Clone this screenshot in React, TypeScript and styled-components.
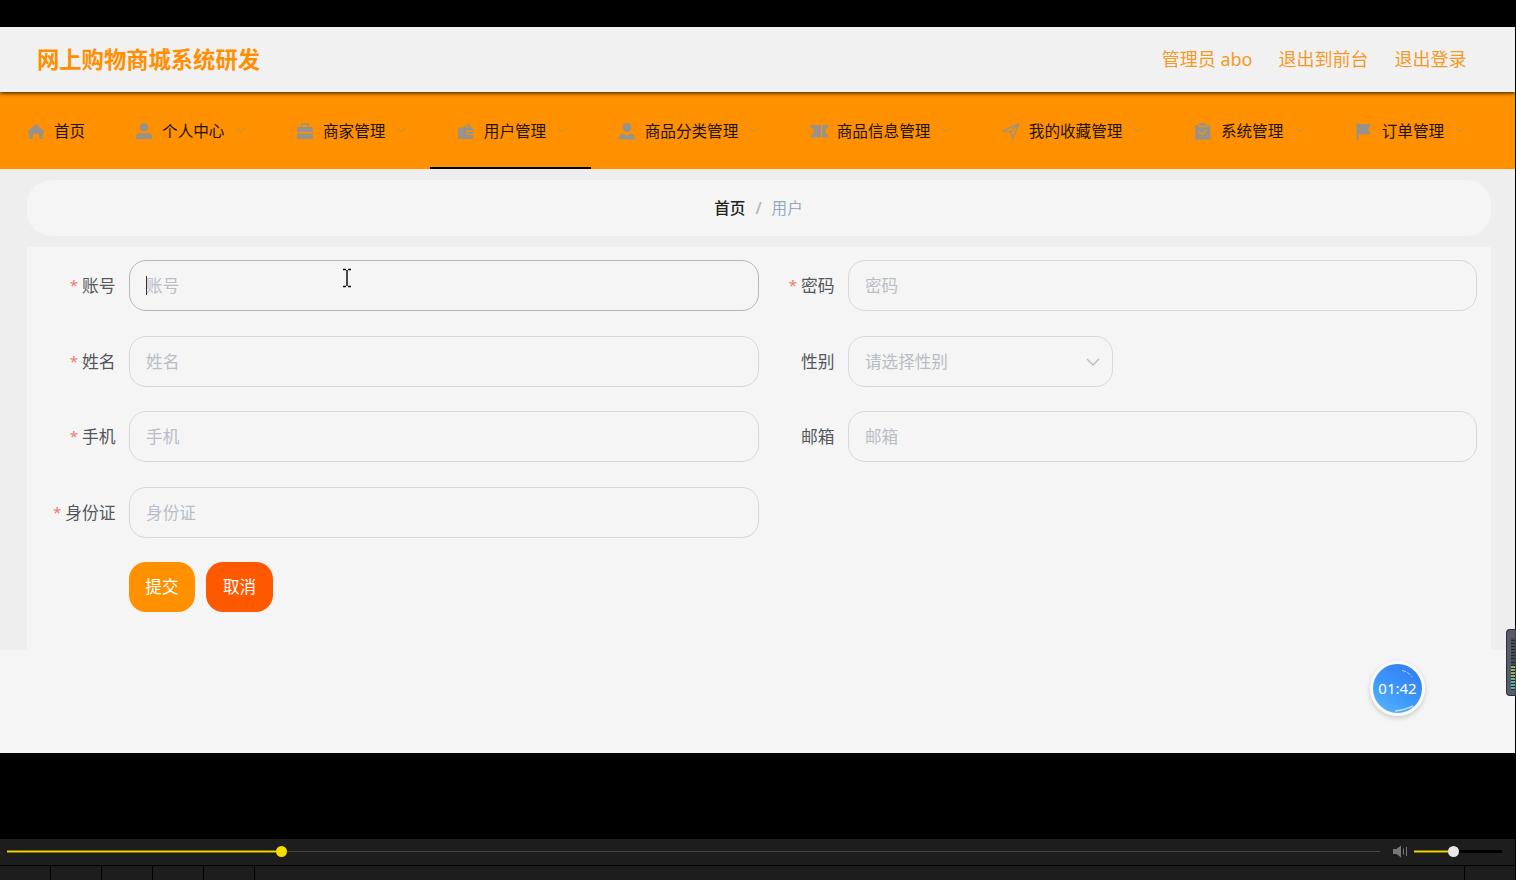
import React from 'react';
import styled, { createGlobalStyle } from 'styled-components';

const Global = createGlobalStyle`
  * { box-sizing: border-box; }
  body { margin: 0; background: #000; overflow: hidden; }
`;

const Screen = styled.div`
  width: 1516px;
  height: 880px;
  padding: 27px 1px 0 0;
  display: flex;
  flex-direction: column;
  background: #000;
  position: relative;
  font-family: 'Noto Sans', 'Noto Sans CJK SC', sans-serif;
`;
const Page = styled.div`
  height: 726px;
  flex: none;
  background: #f5f5f5;
`;
const Header = styled.header`
  height: 65px;
  display: flex;
  align-items: center;
  padding: 0 48.5px 0 37px;
  background: #f1f1f1;
  border-bottom: 1px solid #fbfbf6;
  box-shadow: 0 1px 4px rgba(0, 0, 0, 0.85);
  position: relative;
  color: #ff8f00;
`;
const Title = styled.h1`
  margin: 2px auto 0 0;
  font-size: 22.3px;
  line-height: 30px;
  font-weight: 700;
`;
const HeaderLink = styled.a`
  font-size: 18px;
  line-height: 28px;
  margin: -1px 0 0 26px;
  color: #f39a26;
  white-space: nowrap;
`;
const Nav = styled.nav`
  height: 77px;
  display: flex;
  background: #ff9000;
`;
const NavItem = styled.div<{ $active?: boolean }>`
  flex: none;
  display: flex;
  align-items: center;
  padding: 0 23.1px 0 26.9px;
  border-bottom: 2px solid ${(p) => (p.$active ? '#000' : 'transparent')};
  color: #1c1208;
  font-size: 15.6px;
  line-height: 22px;
  white-space: nowrap;
  svg { flex: none; display: block; }
`;
const NavIcon = styled.svg`
  color: #97938c;
  position: relative;
  top: 1px;
`;
const NavText = styled.span`
  margin: 2px 0 0 9px;
`;
const Arrow = styled.svg`
  margin-left: 10.5px;
`;
const Content = styled.main`
  height: 481px;
  padding: 11px 24px 0 27px;
  background: #eee;
`;
const Crumbs = styled.div`
  height: 56px;
  display: flex;
  align-items: center;
  justify-content: center;
  gap: 10px;
  padding: 0 1px 1px 0;
  border-radius: 24px;
  background: #f5f5f5;
  font-size: 15.6px;
  line-height: 22px;
  color: #97a8be;
`;
const CrumbHome = styled.span`
  color: #222;
  font-weight: 500;
`;
const Slash = styled.span`
  color: #b4b8c0;
  font-weight: 600;
`;
const Form = styled.form`
  margin-top: 11px;
  height: 403px;
  padding: 13px 13.6px 0 12.6px;
  background: #f5f5f5;
`;
const Grid = styled.div`
  display: grid;
  grid-template-columns: 1fr 1fr;
  grid-auto-rows: 51px;
  row-gap: 24.5px;
`;
const Field = styled.div`
  display: flex;
  align-items: center;
`;
const Label = styled.label`
  width: 89px;
  padding: 1px 13px 0 0;
  text-align: right;
  color: #54575c;
  font-size: 16.8px;
  line-height: 24px;
  white-space: nowrap;
`;
const Star = styled.span`
  color: #ee7c6c;
  font-size: 15px;
  margin-right: 4px;
  position: relative;
  top: -1px;
`;
const Box = styled.div<{ $focus?: boolean; $select?: boolean }>`
  ${(p) => (p.$select ? 'width: 265px;' : 'flex: 1;')}
  height: 51px;
  display: flex;
  align-items: center;
  justify-content: space-between;
  padding: 1px 12px 0 16.5px;
  border: 1px solid ${(p) => (p.$focus ? '#b9b7b9' : '#d9d7dc')};
  border-radius: 17px;
  color: #b9bdc5;
  font-size: 16.6px;
  line-height: 24px;
`;
const Value = styled.span<{ $focus?: boolean }>`
  position: relative;
  &::before {
    content: '';
    display: ${(p) => (p.$focus ? 'block' : 'none')};
    position: absolute;
    left: 0;
    top: 2px;
    width: 1px;
    height: 19px;
    background: #333;
  }
`;
const Actions = styled.div`
  display: flex;
  gap: 11px;
  margin: 24.5px 0 0 89px;
`;
const Button = styled.button<{ $color: string }>`
  width: 66.6px;
  height: 50px;
  padding: 0;
  border: 0;
  border-radius: 17px;
  background: ${(p) => p.$color};
  color: #fff;
  font: 16.6px/24px 'Noto Sans', 'Noto Sans CJK SC', sans-serif;
`;
const Pointer = styled.svg`
  position: absolute;
  left: 342px;
  top: 268px;
`;
const Timer = styled.div`
  position: absolute;
  left: 1370px;
  top: 661px;
  width: 55px;
  height: 55px;
  border: 3px solid #fafafa;
  border-radius: 50%;
  box-shadow: 0 2px 5px rgba(0, 0, 0, 0.18);
  background: linear-gradient(35deg, #55b3fb 8%, #3a96fa 48%, #347ef2 90%);
  color: #fff;
  font: 15px/48px 'Noto Sans', sans-serif;
  text-align: center;
  svg { position: absolute; left: 0; top: 0; }
`;
const Meter = styled.div`
  position: absolute;
  left: 1506px;
  top: 629px;
  width: 9px;
  height: 67px;
  padding: 8px 0 6px 4px;
  border: 1px solid #2c2f38;
  border-right: 0;
  border-radius: 4px 0 0 4px;
  background: #565c69;
  box-shadow: 0 0 2px #fff;
  display: flex;
  flex-direction: column;
  gap: 1px;
`;
const Tick = styled.i<{ $color: string }>`
  flex: 1;
  background: ${(p) => p.$color};
  box-shadow: 0 1px 0 #24272e;
`;
const Player = styled.footer`
  margin: auto 0 0;
  height: 41px;
  flex: none;
  background: #1d1d1d;
`;
const Controls = styled.div`
  height: 27px;
  padding: 0 13px 2px 7px;
  display: flex;
  align-items: center;
  border-bottom: 1px solid #000;
`;
const Track = styled.div<{ $w: number; $rest: string; $thick: number }>`
  width: ${(p) => p.$w}px;
  display: flex;
  align-items: center;
  &::after {
    content: '';
    flex: 1;
    height: ${(p) => p.$thick}px;
    background: ${(p) => p.$rest};
  }
`;
const Played = styled.div<{ $w: number }>`
  width: ${(p) => p.$w}px;
  height: 3px;
  background: linear-gradient(#7e7107 0 1px, #f6dd00 1px 2px, #7e7107 2px);
`;
const Knob = styled.div<{ $color: string }>`
  width: 11px;
  height: 11px;
  border-radius: 50%;
  background: ${(p) => p.$color};
`;
const Speaker = styled.svg`
  margin: 0 6px 0 13px;
`;
const Cells = styled.div`
  display: flex;
  height: 14px;
`;
const Cell = styled.div<{ $w: number }>`
  width: ${(p) => p.$w}px;
  border-right: 1px solid #000;
`;

const icons: Record<string, React.ReactNode> = {
  home: <path d="M1 9 9 2l8 7v1.700h-1V17h-3.700v-5.300H6V17H2v-6.300H1z" />,
  user: (
    <>
      <circle cx="9" cy="5.200" r="4.200" />
      <path d="M1 17v-2.200Q1 11.300 4.500 11.300h9Q17 11.300 17 14.800V17z" />
    </>
  ),
  suitcase: (
    <>
      <path d="M5.800 5V2h6.400v3" fill="none" stroke="currentColor" strokeWidth="1.300" />
      <path d="M2.500 5h13q1.500 0 1.500 1.500V10H1V6.500Q1 5 2.500 5zM1 11.500h16V17H1z" />
    </>
  ),
  wallet: (
    <path
      fillRule="evenodd"
      d="M1 5.500h5L11.500 1.500 14 5.500h2.500v3h-5.200a2.300 2.300 0 0 0 0 4.600h5.200V17H1zM8.300 5.500h4L11 3.400zM11.300 9.700h5.200v2.200h-5.200a1.100 1.100 0 0 1 0-2.200z"
    />
  ),
  custom: (
    <>
      <circle cx="9" cy="5.500" r="4.500" />
      <path d="M.5 17.500q0-5 5-6.300L9 14l3.500-2.800q5 1.300 5 6.300z" />
    </>
  ),
  ticket: <path d="M.5 3H11v12.500H.5v-2.300l3-1.500V7l-3-1.500zM12.200 3H18v2.500l-2.500 1.800v4l2.500 1.900v2.300h-5.800z" />,
  position: (
    <path
      d="m1 8.700 15.700-7-6 15.300-2-7.300zM8.700 9.700l8-8"
      fill="none"
      stroke="currentColor"
      strokeWidth="1.300"
      strokeLinejoin="round"
    />
  ),
  claim: (
    <>
      <path d="M1.300 3H5V1.300h7.500V3h3.800v14.500h-15z" />
      <path d="M5 2.200v2.300h7.500V2.200M5 9.700l3 3 5-5" fill="none" stroke="#ff9000" strokeWidth="1.200" />
    </>
  ),
  flag: <path d="M1.500 1.200h2.300V2h12L13.200 7l2.600 5.200h-12v5.300H1.500z" />,
};

const menu = [
  { icon: 'home', text: '首页' },
  { icon: 'user', text: '个人中心', sub: true },
  { icon: 'suitcase', text: '商家管理', sub: true },
  { icon: 'wallet', text: '用户管理', sub: true, active: true },
  { icon: 'custom', text: '商品分类管理', sub: true },
  { icon: 'ticket', text: '商品信息管理', sub: true },
  { icon: 'position', text: '我的收藏管理', sub: true },
  { icon: 'claim', text: '系统管理', sub: true },
  { icon: 'flag', text: '订单管理', sub: true },
];

const fields = [
  { text: '账号', required: true, focus: true },
  { text: '密码', required: true },
  { text: '姓名', required: true },
  { text: '性别', select: true, hint: '请选择性别' },
  { text: '手机', required: true },
  { text: '邮箱' },
  { text: '身份证', required: true },
];

const ticks = Array.from({ length: 17 }, (_, i) => (i < 9 ? '#464a55' : i < 13 ? '#8fb65a' : '#55b8a0'));

export default function App() {
  return (
    <Screen>
      <Global />
      <Page>
        <Header>
          <Title>网上购物商城系统研发</Title>
          <HeaderLink>管理员 abo</HeaderLink>
          <HeaderLink>退出到前台</HeaderLink>
          <HeaderLink>退出登录</HeaderLink>
        </Header>
        <Nav>
          {menu.map((m) => (
            <NavItem key={m.text} $active={m.active}>
              <NavIcon width="18" height="18" viewBox="0 0 18 18" fill="currentColor">
                {icons[m.icon]}
              </NavIcon>
              <NavText>{m.text}</NavText>
              {m.sub && (
                <Arrow width="11" height="8" viewBox="0 0 11 8">
                  <path d="m1 1.500 4.500 4.500L10 1.500" fill="none" stroke="#b8934e" />
                </Arrow>
              )}
            </NavItem>
          ))}
        </Nav>
        <Content>
          <Crumbs>
            <CrumbHome>首页</CrumbHome>
            <Slash>/</Slash>
            <span>用户</span>
          </Crumbs>
          <Form>
            <Grid>
              {fields.map((f) => (
                <Field key={f.text}>
                  <Label>
                    {f.required && <Star>*</Star>}
                    {f.text}
                  </Label>
                  <Box $focus={f.focus} $select={f.select}>
                    <Value $focus={f.focus}>{f.hint ?? f.text}</Value>
                    {f.select && (
                      <svg width="14" height="10" viewBox="0 0 14 10">
                        <path d="m1 2 6 6 6-6" fill="none" stroke="#b6bac2" strokeWidth="1.300" />
                      </svg>
                    )}
                  </Box>
                </Field>
              ))}
            </Grid>
            <Actions>
              <Button type="button" $color="#ff9000">提交</Button>
              <Button type="button" $color="#ff5900">取消</Button>
            </Actions>
          </Form>
        </Content>
      </Page>
      <Pointer width="10" height="20" viewBox="0 0 10 20">
        <path d="M1 1.500h3M6 1.500h3M1 18.500h3M6 18.500h3M5 2v16" fill="none" stroke="#111" strokeWidth="1.500" />
      </Pointer>
      <Timer>
        01:42
        <svg width="49" height="49" viewBox="0 0 49 49" fill="none" stroke="#b9dcff">
          <path d="M29 6.500q6 1 10 6.500" strokeDasharray="4 1.500" />
          <path d="M22 47q10-1 18-5" strokeWidth="1.500" />
        </svg>
      </Timer>
      <Meter>
        {ticks.map((c, i) => (
          <Tick key={i} $color={c} />
        ))}
      </Meter>
      <Player>
        <Controls>
          <Track $w={1373} $rest="#444" $thick={1}>
            <Played $w={269} />
            <Knob $color="#f6dd00" />
          </Track>
          <Speaker width="15" height="13" viewBox="0 0 15 13" fill="#777">
            <path d="M0 4h3.500L8 .5v12L3.500 9H0zM10 3.500h1v6h-1zM13 2h1v9h-1z" />
          </Speaker>
          <Track $w={88} $rest="#000" $thick={3}>
            <Played $w={34} />
            <Knob $color="#e8e8e8" />
          </Track>
        </Controls>
        <Cells>
          <Cell $w={51} />
          <Cell $w={51} />
          <Cell $w={51} />
          <Cell $w={51} />
          <Cell $w={51} />
          <Cell $w={1210} />
        </Cells>
      </Player>
    </Screen>
  );
}
